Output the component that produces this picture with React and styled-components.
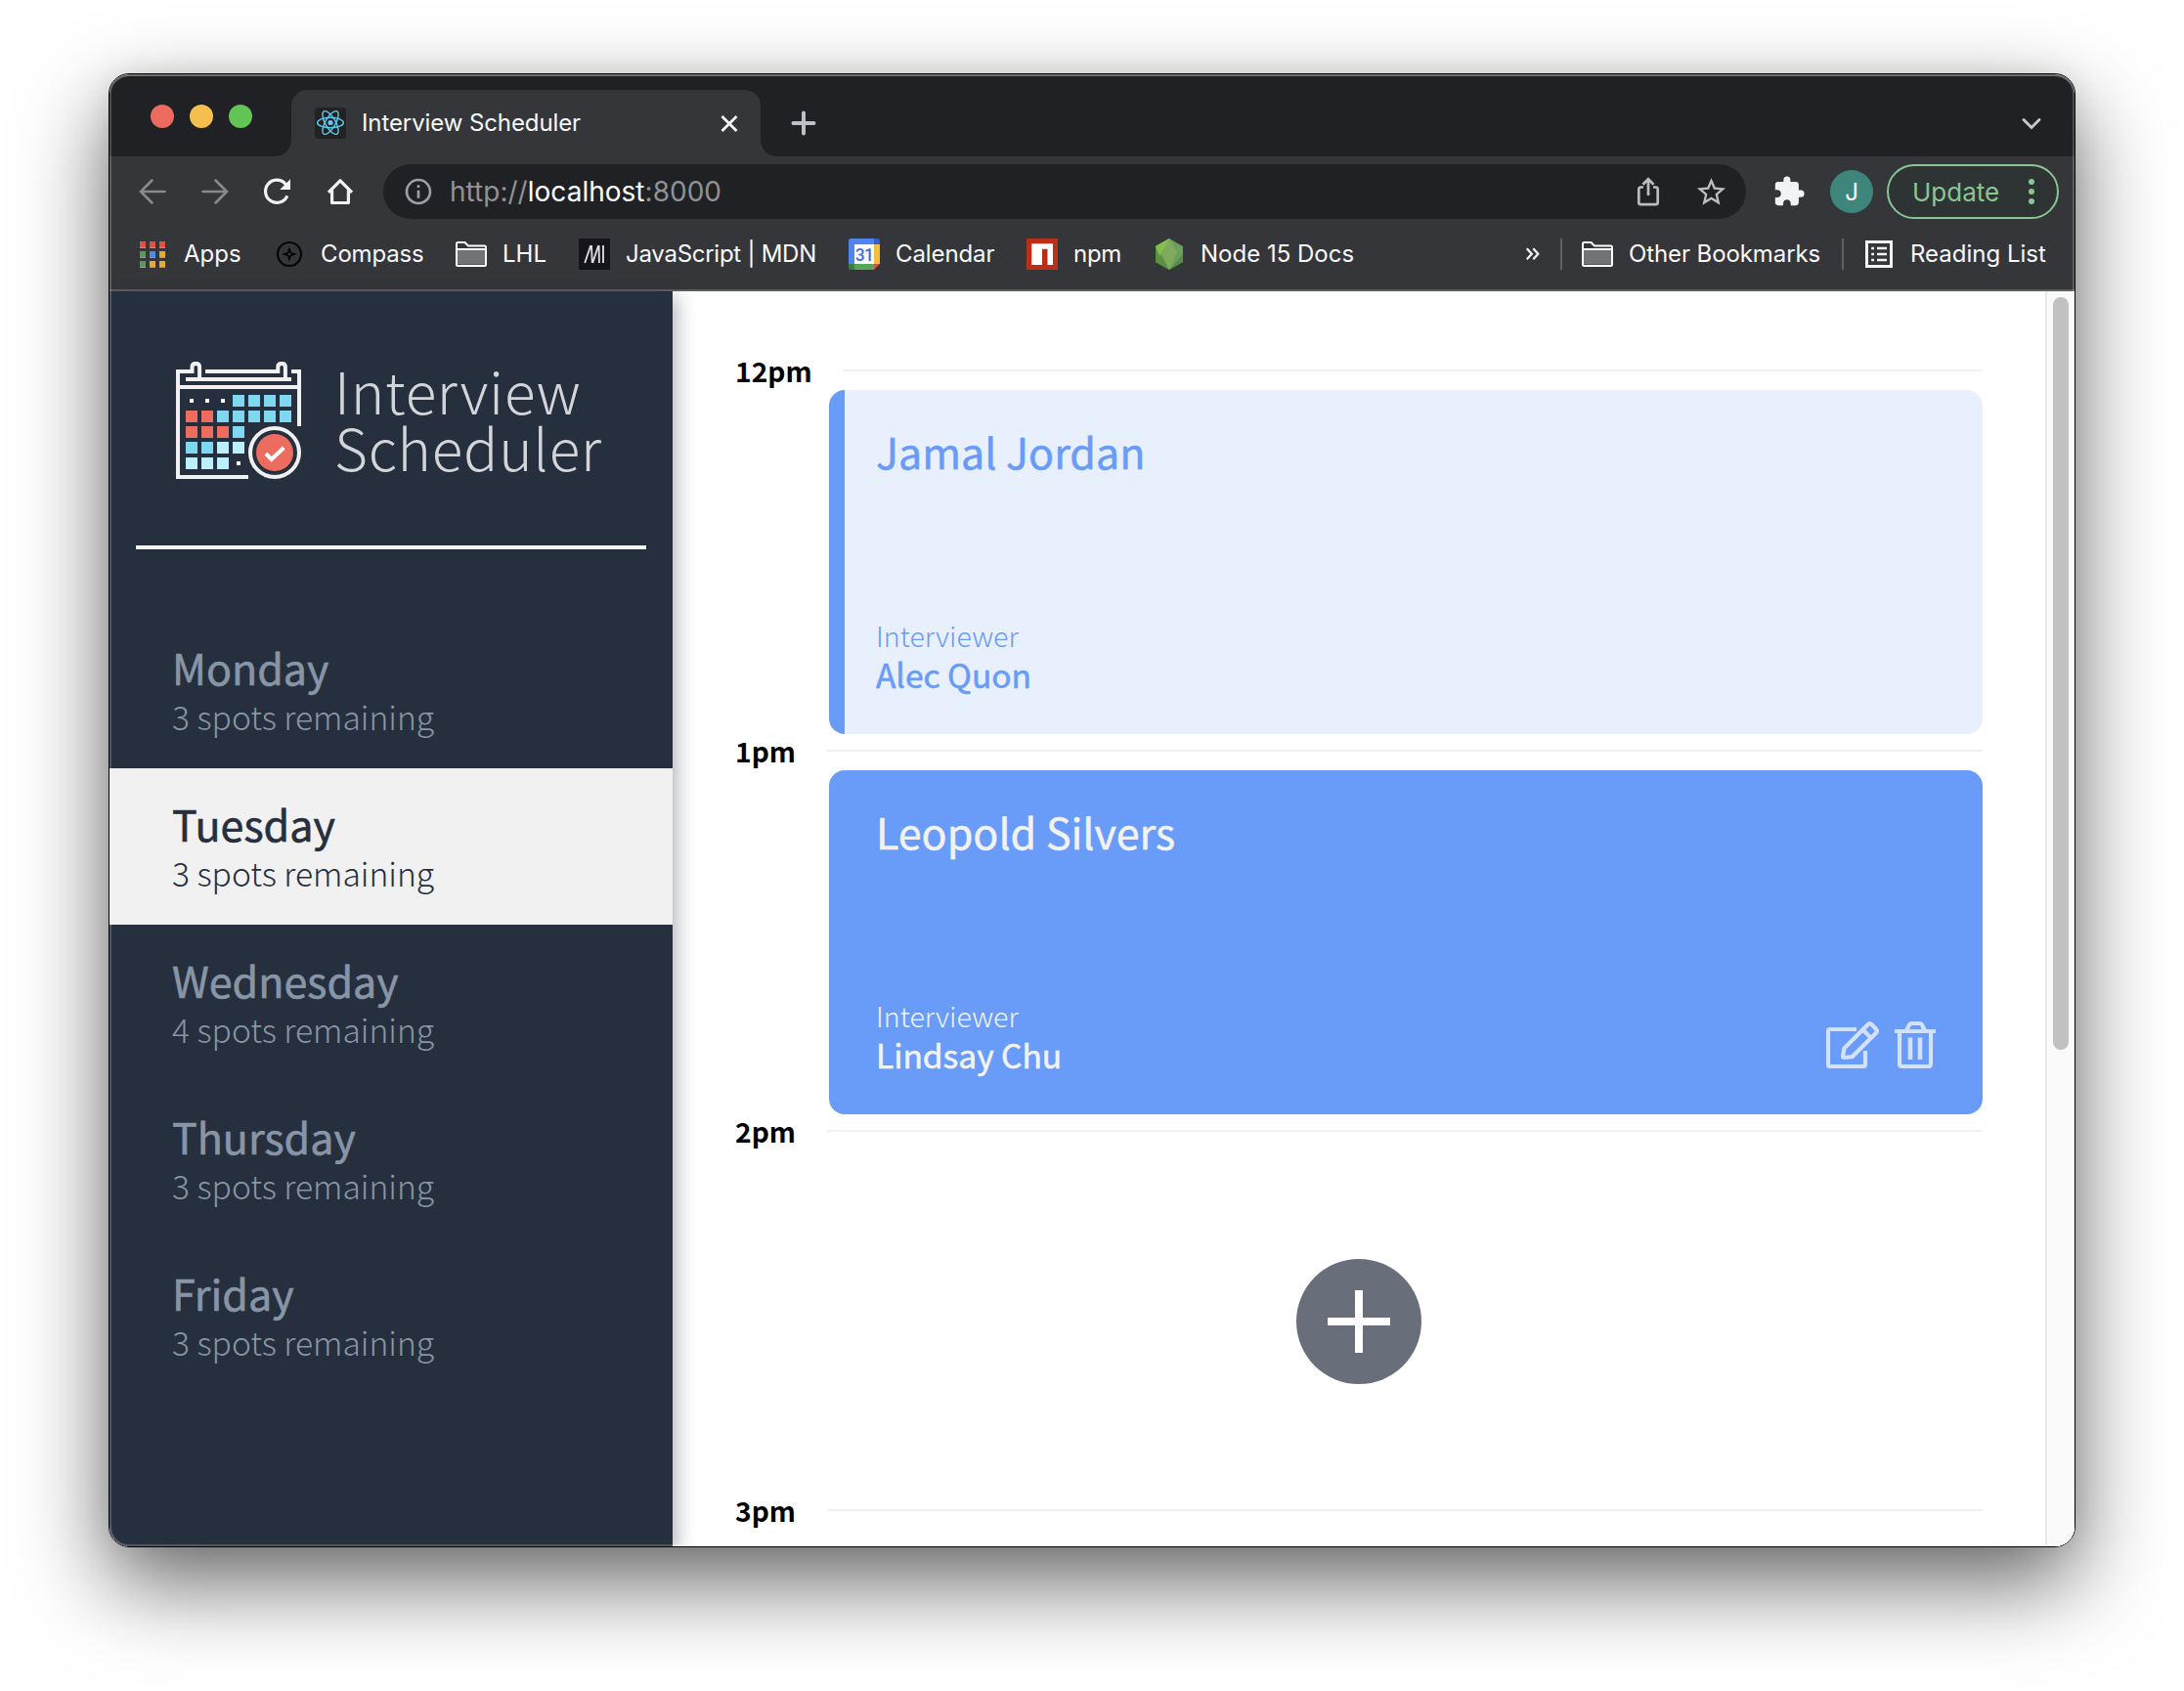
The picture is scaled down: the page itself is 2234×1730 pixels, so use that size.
import React from "react";
import styled, { createGlobalStyle, css } from "styled-components";
import { MdExtension, MdStarBorder, MdInfoOutline } from "react-icons/md";

const uiFont = `Inter, "Liberation Sans", sans-serif`;
const pageFont = `"Noto Sans CJK SC", "Noto Sans", sans-serif`;

const GlobalStyle = createGlobalStyle`
  * { box-sizing: border-box; }
  html, body { margin: 0; background: #fff; }
  body { height: 1730px; overflow: hidden; -webkit-font-smoothing: antialiased; }
  svg { display: block; flex: none; }
`;

/* ---------- window ---------- */

const Window = styled.div`
  position: relative;
  display: flex;
  flex-direction: column;
  width: 2012px;
  height: 1508px;
  margin: 75px 0 0 111px;
  border: 1px solid #000;
  border-radius: 21px;
  box-shadow: 0 36px 90px rgba(0, 0, 0, 0.6), 0 0 30px rgba(0, 0, 0, 0.08);
  font-family: ${uiFont};
  &::after {
    content: "";
    position: absolute;
    inset: 0;
    border-radius: 20px;
    box-shadow: inset 0 0 0 2px rgba(255, 255, 255, 0.2), inset 0 2px 0 rgba(255, 255, 255, 0.2);
    pointer-events: none;
    z-index: 5;
  }
`;

const Clip = styled.div`
  display: flex;
  flex-direction: column;
  flex: 1;
  min-height: 0;
  border-radius: 20px;
  overflow: hidden;
`;

const TabStrip = styled.div`
  display: flex;
  align-items: center;
  height: 84px;
  padding: 16px 32px 0 42px;
  background: #202124;
`;

const Lights = styled.div`
  display: flex;
  gap: 16px;
  margin-bottom: 14px;
`;

const Light = styled.span`
  width: 24px;
  height: 24px;
  border-radius: 50%;
  background: ${(p) => p.$color};
`;

const flare = css`
  content: "";
  position: absolute;
  bottom: 0;
  width: 16px;
  height: 16px;
`;

const Tab = styled.div`
  position: relative;
  display: flex;
  align-items: center;
  width: 480px;
  height: 68px;
  margin: 0 30px 0 40px;
  padding: 0 20px 0 24px;
  border-radius: 16px 16px 0 0;
  background: #35363a;
  &::before {
    ${flare}
    left: -16px;
    background: radial-gradient(circle at 0 0, transparent 15.5px, #35363a 16px);
  }
  &::after {
    ${flare}
    right: -16px;
    background: radial-gradient(circle at 100% 0, transparent 15.5px, #35363a 16px);
  }
`;

const TabTitle = styled.span`
  flex: 1;
  margin-left: 16px;
  padding-bottom: 1px;
  font-size: 24px;
  letter-spacing: -0.1px;
  color: #f8f9fa;
`;

const Push = styled.span`
  margin-left: auto;
`;

const Toolbar = styled.div`
  display: flex;
  align-items: center;
  height: 72px;
  padding-left: 28px;
  background: #35363a;
`;

const NavButtons = styled.div`
  display: flex;
  gap: 32px;
`;

const IconBox = styled.span`
  display: flex;
  align-items: center;
  justify-content: center;
  width: 32px;
  height: 32px;
  flex: none;
  color: ${(p) => p.$color || "#f1f3f4"};
`;

const Omnibox = styled.div`
  display: flex;
  align-items: center;
  width: 1394px;
  height: 56px;
  margin: 0 28px;
  padding: 0 20px;
  border-radius: 28px;
  background: #202124;
`;

const Url = styled.span`
  flex: 1;
  margin-left: 16px;
  font-size: 28px;
  letter-spacing: 0.02px;
  color: #909295;
  b {
    font-weight: 400;
    color: #fff;
  }
`;

const OmniActions = styled.span`
  display: flex;
  gap: 32px;
`;

const Avatar = styled.span`
  display: flex;
  align-items: center;
  justify-content: center;
  width: 44px;
  height: 44px;
  margin: 0 14px 0 26px;
  border-radius: 50%;
  background: #3e867b;
  color: #fff;
  font-size: 24px;
`;

const UpdateButton = styled.span`
  display: flex;
  align-items: center;
  justify-content: space-between;
  width: 176px;
  height: 56px;
  padding: 0 22px 0 24px;
  border: 2px solid #8bc594;
  border-radius: 28px;
  background: #2e3433;
  color: #8bc594;
  font-size: 26px;
  letter-spacing: 0;
`;

const BookmarkBar = styled.div`
  display: flex;
  align-items: center;
  height: 66px;
  padding: 0 0 8px 28px;
  border-bottom: 2px solid #5d5e61;
  background: #35363a;
`;

const Bookmark = styled.span`
  display: flex;
  align-items: center;
  gap: 16px;
  width: ${(p) => p.$w}px;
  color: #f8f9fa;
  font-size: 24px;
  letter-spacing: ${(p) => p.$ls || 0}px;
  white-space: nowrap;
`;

const BookmarkLabel = styled.span`
  padding-bottom: 2px;
`;

const Chevrons = styled.span`
  width: 36px;
  margin-left: auto;
  display: flex;
`;

const BarDivider = styled.span`
  width: 2px;
  height: 32px;
  margin-right: 20px;
  background: #606165;
`;

/* ---------- page ---------- */

const Page = styled.div`
  display: flex;
  flex: 1;
  min-height: 0;
  background: #fff;
  font-family: ${pageFont};
`;

const Sidebar = styled.aside`
  position: relative;
  display: flex;
  flex-direction: column;
  width: 576px;
  flex: none;
  background: #262f3d;
  box-shadow: 4px 6px 18px rgba(34, 47, 62, 0.38);
`;

const Logo = styled.div`
  display: flex;
  height: 188px;
  margin-top: 72px;
  padding-left: 68px;
`;

const LogoText = styled.div`
  margin-left: 34px;
  font-weight: 200;
  font-size: 58.5px;
  line-height: 58px;
  color: #d3d5d8;
`;

const LogoLine = styled.div`
  letter-spacing: ${(p) => p.$ls}px;
  white-space: nowrap;
`;

const Rule = styled.hr`
  width: 522px;
  height: 4px;
  margin: 0 27px 64px;
  border: 0;
  background: #f6f6f3;
`;

const DayItem = styled.div`
  height: 160px;
  padding: 32px 64px 0;
  background: ${(p) => (p.$selected ? "#f1f1f1" : "transparent")};
  color: ${(p) => (p.$selected ? "#262f3d" : "#8795a6")};
`;

const DayName = styled.div`
  font-size: 43px;
  line-height: 48px;
  -webkit-text-stroke: 0.6px currentColor;
`;

const DaySpots = styled.div`
  font-size: 33.6px;
  line-height: 54px;
  font-weight: 300;
`;

const Schedule = styled.main`
  flex: 1;
  padding: 64px 64px 0;
  overflow: hidden;
`;

const Slot = styled.section`
  height: ${(p) => (p.$empty ? 388 : 389)}px;
`;

const SlotHead = styled.div`
  display: flex;
  align-items: center;
  height: 34px;
  margin-bottom: 3px;
  font-size: 28.2px;
  line-height: 34px;
  font-weight: 700;
  color: #000;
`;

const SlotLine = styled.span`
  flex: 1;
  height: 2px;
  margin-left: 32px;
  background: #f1f1f1;
`;

const Card = styled.article`
  display: flex;
  flex-direction: column;
  justify-content: space-between;
  height: 352px;
  margin-left: 96px;
  padding: 38px 48px 41px ${(p) => (p.$hover ? 48 : 32)}px;
  border-left: ${(p) => (p.$hover ? 0 : 16)}px solid #699cf9;
  border-radius: 16px;
  background: ${(p) => (p.$hover ? "#699cf9" : "#e8f0fe")};
  color: ${(p) => (p.$hover ? "#f2f2f2" : "#699cf9")};
`;

const Student = styled.div`
  font-size: 43px;
  line-height: 49px;
  -webkit-text-stroke: 0.5px currentColor;
`;

const CardFoot = styled.div`
  display: flex;
  align-items: flex-end;
  justify-content: space-between;
`;

const InterviewerLabel = styled.div`
  font-size: 28.6px;
  line-height: 40px;
  font-weight: 300;
`;

const InterviewerName = styled.div`
  font-size: 33.5px;
  line-height: 40px;
  -webkit-text-stroke: 0.6px currentColor;
`;

const CardActions = styled.div`
  display: flex;
  gap: 16px;
  margin-bottom: 6px;
  color: #d2e1fd;
`;

const EmptySlot = styled.div`
  display: flex;
  align-items: center;
  justify-content: center;
  height: 350px;
`;

const ScrollTrack = styled.div`
  width: 30px;
  flex: none;
  padding: 6px 0 0 6px;
  border-left: 2px solid #e8e8e8;
  background: #fafafa;
`;

const ScrollThumb = styled.div`
  width: 16px;
  height: 770px;
  border-radius: 8px;
  background: #c1c1c1;
`;

/* ---------- icons ---------- */

const stroke = (w) => ({ fill: "none", stroke: "currentColor", strokeWidth: w });

const ReactIcon = () => (
  <svg width="32" height="32" viewBox="0 0 32 32">
    <rect width="32" height="32" rx="4" fill="#222" />
    <g fill="none" stroke="#61c9ee" strokeWidth="1.4">
      {[0, 60, 120].map((a) => (
        <ellipse key={a} cx="16" cy="15.5" rx="13.4" ry="5.2" transform={`rotate(${a} 16 15.5)`} />
      ))}
    </g>
    <circle cx="16" cy="15.5" r="2.6" fill="#61c9ee" />
  </svg>
);

const CloseIcon = () => (
  <svg width="24" height="24" viewBox="0 0 24 24" color="#f4f5f6">
    <path d="M4.5 5 19.5 20M19.5 5 4.5 20" {...stroke(2.8)} />
  </svg>
);

const NewTabIcon = () => (
  <svg width="28" height="28" viewBox="0 0 28 28" color="#bdc1c6">
    <path d="M14 3.5V24.5M3.5 14H24.5" {...stroke(4)} strokeLinecap="round" />
  </svg>
);

const ChevronIcon = () => (
  <svg width="24" height="24" viewBox="0 0 24 24" color="#c6c9cd">
    <path d="M4 8.5 12 16.5 20 8.5" {...stroke(3)} strokeLinecap="round" />
  </svg>
);

const ArrowIcon = ({ forward }) => (
  <svg width="32" height="32" viewBox="0 0 32 32">
    <path
      d={forward ? "M3.5 16H27M16.5 4.5 28 16 16.5 27.5" : "M28.5 16H5M15.5 4.5 4 16 15.5 27.5"}
      {...stroke(2.6)}
      strokeLinecap="round"
    />
  </svg>
);

const ReloadIcon = () => (
  <svg width="32" height="32" viewBox="0 0 32 32">
    <path d="M25.8 20.3A11.6 11.6 0 1 1 23.6 7.8L25.5 10" {...stroke(3.2)} />
    <path d="M29 3.2V14H18.2Z" fill="currentColor" />
  </svg>
);

const HomeIcon = () => (
  <svg width="32" height="32" viewBox="0 0 32 32">
    <path d="M4 16.8 16 4.8 28 16.8M7.6 14.5V27.5H24.4V14.5" {...stroke(3.2)} strokeLinejoin="round" />
  </svg>
);

const ShareIcon = () => (
  <svg width="32" height="32" viewBox="0 0 32 32">
    <path d="M11 11.5H8.5Q6.3 11.5 6.3 13.7V27Q6.3 29.2 8.5 29.2H23.5Q25.7 29.2 25.7 27V13.7Q25.7 11.5 23.5 11.5H21M16 20V4M10.5 8.7 16 3.2 21.5 8.7" {...stroke(2.7)} />
  </svg>
);

const DotsIcon = () => (
  <svg width="8" height="28" viewBox="0 0 8 28" fill="currentColor">
    <circle cx="4" cy="4" r="3" />
    <circle cx="4" cy="14" r="3" />
    <circle cx="4" cy="24" r="3" />
  </svg>
);

const appColors = ["#e2503f", "#e2503f", "#e2503f", "#57995b", "#4a8af0", "#e5a934", "#57995b", "#e5a934", "#e5a934"];
const AppsIcon = () => (
  <svg width="26" height="27" viewBox="0 0 26 27">
    {appColors.map((c, i) => (
      <g key={i}>
        <rect x={(i % 3) * 10} y={Math.floor(i / 3) * 10} width="6" height="7" fill="#96989b" />
        <rect x={(i % 3) * 10} y={Math.floor(i / 3) * 10} width="6" height="6" fill={c} />
      </g>
    ))}
  </svg>
);

const CompassIcon = () => (
  <svg width="28" height="28" viewBox="0 0 28 28" color="#060607">
    <circle cx="14" cy="14" r="12" {...stroke(2.2)} />
    <path fillRule="evenodd" d="M14 6 16 12 22 14 16 16 14 22 12 16 6 14 12 12ZM14 12.5A1.5 1.5 0 1 0 14 15.5 1.5 1.5 0 1 0 14 12.5Z" fill="currentColor" />
  </svg>
);

const FolderIcon = () => (
  <svg width="32" height="26" viewBox="0 0 32 26">
    <path d="M1 23.5V2.5Q1 1 2.5 1H9.5L13 4.5H29.5Q31 4.5 31 6V23.5Q31 25 29.5 25H2.5Q1 25 1 23.5Z" fill="#35363a" stroke="#fff" strokeWidth="2" />
    <rect x="2" y="8.5" width="28" height="15" fill="#727376" />
    <path d="M1 8H31" stroke="#fff" strokeWidth="2" />
  </svg>
);

const MdnIcon = () => (
  <svg width="32" height="32" viewBox="0 0 32 32">
    <rect width="32" height="32" fill="#15141a" />
    <path d="M6.2 25 12.3 7M13 7 13.8 25M14.2 25 20.2 7M20.6 7 20.9 25M25 7V25" stroke="#d8d8da" strokeWidth="1.9" fill="none" />
  </svg>
);

const CalendarIcon = () => (
  <svg width="32" height="32" viewBox="0 0 32 32">
    <path d="M2.5 0H26V6H6V26H0V2.5Q0 0 2.5 0Z" fill="#5084ef" />
    <path d="M26 0H29.5Q32 0 32 2.5V6H26Z" fill="#2f62cf" />
    <rect x="26" y="6" width="6" height="20" fill="#f3be3e" />
    <rect x="6" y="26" width="20" height="6" fill="#58a55c" />
    <path d="M0 26H6V32H2.5Q0 32 0 29.5Z" fill="#3b7f42" />
    <path d="M26 26H32L26 32Z" fill="#d9503f" />
    <rect x="6" y="6" width="20" height="20" fill="#fff" />
    <text x="16" y="22.6" textAnchor="middle" fontFamily="Roboto, sans-serif" fontSize="17.5" fontWeight="500" letterSpacing="-0.6" fill="#3e6fd6">31</text>
  </svg>
);

const NpmIcon = () => (
  <svg width="32" height="32" viewBox="0 0 32 32">
    <rect width="32" height="32" fill="#bb2e18" />
    <path d="M5.3 5.3H27V27H21.5V10.8H16V27H5.3Z" fill="#fff" />
  </svg>
);

const NodeIcon = () => (
  <svg width="32" height="32" viewBox="0 0 32 32">
    <path d="M16 0 30 8V24L16 32 2 24V8Z" fill="#6d9f5c" />
    <path d="M16 0 2 8V24Z" fill="#7bb74f" />
    <path d="M2 8 16 32 2 24Z" fill="#5a9140" />
    <path d="M16 0 5 8 16 32 24 14Z" fill="#80ab5f" />
    <path d="M16 0 2 8 6 18 16 0Z" fill="#7fc14c" />
    <path d="M30 16 30 24 16 32Z" fill="#588b45" />
  </svg>
);

const MoreIcon = () => (
  <svg width="16" height="16" viewBox="0 0 16 16" color="#f1f3f4">
    <path d="M1.8 2.2 6.8 7.7 1.8 13.2M8.3 2.2 13.3 7.7 8.3 13.2" {...stroke(2.3)} />
  </svg>
);

const ReadingIcon = () => (
  <svg width="28" height="28" viewBox="0 0 28 28" color="#f1f3f4">
    <rect x="1.5" y="1.5" width="25" height="25" {...stroke(3)} />
    <path d="M6.2 8H9M12 8H22M6.2 14H9M12 14H22M6.2 20H9M12 20H22" {...stroke(2.6)} />
  </svg>
);

const B = "#80d7f0";
const R = "#ec6d5f";
const L = "#baeffb";
const cells = [
  ["dot", "dot", "dot", B, B, B, B],
  [R, R, B, B, B, B, B],
  [R, R, R, B],
  [B, B, L, L],
  [L, L, L, "dot"],
];

const LogoIcon = () => (
  <svg width="128" height="122" viewBox="0 0 128 122" color="#f1f1f2">
    <g {...stroke(4)}>
      <path d="M74 118H2V10H16.5V5.5Q16.5 1.9 20.3 1.9T24.1 5.5V18" />
      <path d="M30 10H104.3V5.5Q104.3 1.9 108.1 1.9T111.9 5.5V18" />
      <path d="M10 18H118M2 26H126M118 10H126V66" />
      <circle cx="101" cy="93" r="25" />
    </g>
    {cells.map((row, y) =>
      row.map((c, x) =>
        c === "dot" ? (
          <rect key={`${x}-${y}`} x={14 + x * 16} y={38 + y * 16} width="4" height="4" fill="#fff" />
        ) : (
          <rect key={`${x}-${y}`} x={10 + x * 16} y={34 + y * 16} width="12" height="12" fill={c} />
        )
      )
    )}
    <circle cx="101" cy="93" r="19" fill={R} />
    <path d="M92 94 97.7 100 110.3 88" fill="none" stroke="#fff" strokeWidth="4" />
  </svg>
);

const EditIcon = () => (
  <svg width="54" height="48" viewBox="0 0 54 48">
    <path d="M31 8H4Q2 8 2 10V44Q2 46 4 46H38Q40 46 40 44V30" {...stroke(4.2)} />
    <path d="M42.6 3.2Q44.6 1.4 46.6 3.2L51 7.8Q52.8 9.8 51 11.8L26.8 36 18.4 37Q17 37 17 35.6L18.4 27.6ZM37.5 8.5 46 17" {...stroke(4.2)} />
  </svg>
);

const TrashIcon = () => (
  <svg width="42" height="48" viewBox="0 0 42 48">
    <path d="M0 10H42M12 9.5 15 3.5Q15.8 2 17.5 2H25.5Q27 2 28 3.5L31 9.5M5 10V43.5Q5 46 7.5 46H34.5Q37 46 37 43.5V10" {...stroke(4.2)} />
    <path d="M16 16.5V39M26 16.5V39" {...stroke(4.6)} />
  </svg>
);

const AddIcon = () => (
  <svg width="128" height="128" viewBox="0 0 128 128">
    <circle cx="64" cy="64" r="64" fill="#686f7a" />
    <path d="M64 32V96M32 64H96" stroke="#fff" strokeWidth="8" />
  </svg>
);

/* ---------- data ---------- */

const bookmarks = [
  { label: "Apps", w: 140, icon: <AppsIcon /> },
  { label: "Compass", w: 186, icon: <CompassIcon />, ls: -0.15 },
  { label: "LHL", w: 126, icon: <FolderIcon /> },
  { label: "JavaScript | MDN", w: 276, icon: <MdnIcon />, ls: -0.26 },
  { label: "Calendar", w: 182, icon: <CalendarIcon />, ls: -0.1 },
  { label: "npm", w: 130, icon: <NpmIcon />, ls: -0.3 },
  { label: "Node 15 Docs", w: 220, icon: <NodeIcon /> },
];

const days = [
  { name: "Monday", spots: 3 },
  { name: "Tuesday", spots: 3, selected: true },
  { name: "Wednesday", spots: 4 },
  { name: "Thursday", spots: 3 },
  { name: "Friday", spots: 3 },
];

const slots = [
  { time: "12pm", student: "Jamal Jordan", interviewer: "Alec Quon" },
  { time: "1pm", student: "Leopold Silvers", interviewer: "Lindsay Chu", hover: true },
  { time: "2pm", empty: true },
  { time: "3pm" },
];

const Appointment = ({ slot }) => (
  <Card $hover={slot.hover}>
    <Student>{slot.student}</Student>
    <CardFoot>
      <div>
        <InterviewerLabel>Interviewer</InterviewerLabel>
        <InterviewerName>{slot.interviewer}</InterviewerName>
      </div>
      {slot.hover && (
        <CardActions>
          <EditIcon />
          <TrashIcon />
        </CardActions>
      )}
    </CardFoot>
  </Card>
);

export default function App() {
  return (
    <>
      <GlobalStyle />
      <Window>
        <Clip>
          <TabStrip>
            <Lights>
              <Light $color="#ec6a5e" />
              <Light $color="#f4bf4f" />
              <Light $color="#61c454" />
            </Lights>
            <Tab>
              <ReactIcon />
              <TabTitle>Interview Scheduler</TabTitle>
              <CloseIcon />
            </Tab>
            <NewTabIcon />
            <Push>
              <ChevronIcon />
            </Push>
          </TabStrip>
          <Toolbar>
            <NavButtons>
              <IconBox $color="#88898c"><ArrowIcon /></IconBox>
              <IconBox $color="#88898c"><ArrowIcon forward /></IconBox>
              <IconBox><ReloadIcon /></IconBox>
              <IconBox><HomeIcon /></IconBox>
            </NavButtons>
            <Omnibox>
              <IconBox $color="#9aa0a6"><MdInfoOutline size={32} /></IconBox>
              <Url>http://<b>localhost</b>:8000</Url>
              <OmniActions>
                <IconBox $color="#bdbdbe"><ShareIcon /></IconBox>
                <IconBox $color="#bdbdbe"><MdStarBorder size={35} /></IconBox>
              </OmniActions>
            </Omnibox>
            <IconBox><MdExtension size={34} /></IconBox>
            <Avatar>J</Avatar>
            <UpdateButton>
              Update
              <DotsIcon />
            </UpdateButton>
          </Toolbar>
          <BookmarkBar>
            {bookmarks.map((b) => (
              <Bookmark key={b.label} $w={b.w} $ls={b.ls}>
                <IconBox>{b.icon}</IconBox>
                <BookmarkLabel>{b.label}</BookmarkLabel>
              </Bookmark>
            ))}
            <Chevrons><MoreIcon /></Chevrons>
            <BarDivider />
            <Bookmark $w={266} $ls={-0.1}>
              <IconBox><FolderIcon /></IconBox>
              <BookmarkLabel>Other Bookmarks</BookmarkLabel>
            </Bookmark>
            <BarDivider />
            <Bookmark $w={216}>
              <IconBox><ReadingIcon /></IconBox>
              <BookmarkLabel>Reading List</BookmarkLabel>
            </Bookmark>
          </BookmarkBar>
          <Page>
            <Sidebar>
              <Logo>
                <LogoIcon />
                <LogoText>
                  <LogoLine $ls={0.75}>Interview</LogoLine>
                  <LogoLine $ls={0.75}>Scheduler</LogoLine>
                </LogoText>
              </Logo>
              <Rule />
              {days.map((d) => (
                <DayItem key={d.name} $selected={d.selected}>
                  <DayName>{d.name}</DayName>
                  <DaySpots>{d.spots} spots remaining</DaySpots>
                </DayItem>
              ))}
            </Sidebar>
            <Schedule>
              {slots.map((s) => (
                <Slot key={s.time} $empty={s.empty}>
                  <SlotHead>
                    {s.time}
                    <SlotLine />
                  </SlotHead>
                  {s.student && <Appointment slot={s} />}
                  {s.empty && (
                    <EmptySlot>
                      <AddIcon />
                    </EmptySlot>
                  )}
                </Slot>
              ))}
            </Schedule>
            <ScrollTrack>
              <ScrollThumb />
            </ScrollTrack>
          </Page>
        </Clip>
      </Window>
    </>
  );
}
